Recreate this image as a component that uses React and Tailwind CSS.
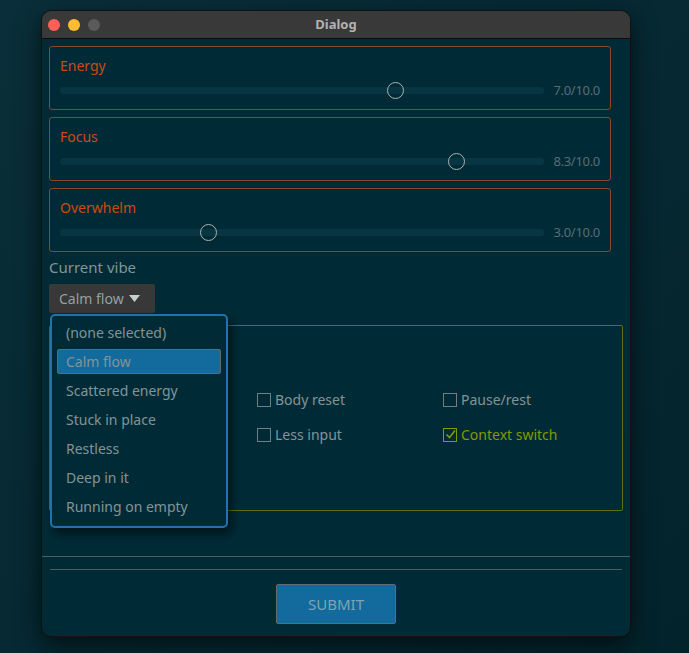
import React from "react";

const font = { fontFamily: '"Noto Sans", "Open Sans", sans-serif' };

function Slider({ label, value }) {
  const p = value / 10;
  return (
    <div className="h-[64px] border border-[#8a4726] rounded-[3px] pl-[10px] pr-[10px] pt-[9px]">
      <div className="text-[14px] leading-[20px] text-[#cb4b16]">{label}</div>
      <div className="flex items-center h-[18px] mt-[5px]">
        <div className="relative flex-1 h-[7px] rounded-[3px] bg-[#073642]">
          <div
            className="absolute top-[-5px] w-[17px] h-[17px] rounded-full border-[1.5px] border-[#a9b3b3]"
            style={{ left: `calc(${p} * (100% - 17px))` }}
          />
        </div>
        <div className="ml-[9px] text-[13px] text-[#586e75] leading-none tracking-[-0.3px]">
          {value.toFixed(1)}/10.0
        </div>
      </div>
    </div>
  );
}

function Check({ label, checked }) {
  return (
    <div className={`flex items-center gap-[4px] text-[14px] ${checked ? "text-[#859900]" : "text-[#839496]"}`}>
      <div
        className={`w-[14px] h-[14px] border flex items-center justify-center ${checked ? "border-[#859900] border-[1.5px]" : "border-[#6c7f84]"}`}
      >
        {checked && (
          <svg width="11" height="11" viewBox="0 0 11 11">
            <path d="M1.5 5.5 L4.5 8.5 L10 1.5" fill="none" stroke="#859900" strokeWidth="1.6" />
          </svg>
        )}
      </div>
      <span>{label}</span>
    </div>
  );
}

const options = [
  "(none selected)",
  "Calm flow",
  "Scattered energy",
  "Stuck in place",
  "Restless",
  "Deep in it",
  "Running on empty",
];

export default function App() {
  return (
    <div className="w-[689px] h-[653px] bg-gradient-to-br from-[#0a2f3a] to-[#03232b] pt-[10px] pl-[41px]" style={font}>
      <div className="w-[590px] h-[627px] rounded-[10px] overflow-hidden flex flex-col border border-[#111] shadow-[0_8px_24px_rgba(0,0,0,0.6)] bg-[#002b36]">
        <div className="h-[28px] bg-[#393939] grid grid-cols-[1fr_auto_1fr] items-center border-b border-[#0d0d0d]">
          <div className="flex items-center gap-[8px] pl-[6px]">
            <div className="w-[12px] h-[12px] rounded-full bg-[#fe5f57]" />
            <div className="w-[12px] h-[12px] rounded-full bg-[#febc2e]" />
            <div className="w-[12px] h-[12px] rounded-full bg-[#5a5a5a]" />
          </div>
          <div className="text-[13px] font-bold text-[#b2b2b2]">Dialog</div>
          <div />
        </div>

        <div className="h-[517px] pl-[7px] pt-[7px]">
          <div className="w-[562px] flex flex-col gap-[7px]">
            <Slider label="Energy" value={7.0} />
            <Slider label="Focus" value={8.3} />
            <Slider label="Overwhelm" value={3.0} />
          </div>
          <div className="mt-[4px] text-[15px] leading-[22px] text-[#839496]">Current vibe</div>
          <div className="relative mt-[6px] w-[106px]">
            <div className="h-[29px] w-[106px] bg-[#383838] rounded-[2px] flex items-center pl-[10px] gap-[5px] text-[14px] text-[#93a1a1]">
              <span>Calm flow</span>
              <svg width="11" height="8" viewBox="0 0 11 8">
                <path d="M0 0 H11 L5.5 7 Z" fill="#c8cfcf" />
              </svg>
            </div>
            <div className="absolute z-10 left-[1px] top-[30px] w-[178px] h-[214px] border-2 border-[#1f73aa] rounded-[5px] bg-[#002b36] shadow-[4px_6px_10px_rgba(0,0,0,0.5)] px-[5px] pt-[2px]">
              {options.map((o, i) => (
                <div key={o} className="h-[29px] flex items-center">
                  <div
                    className={`w-full h-[25px] flex items-center pl-[8px] text-[14px] text-[#839496] border ${
                      i === 1 ? "bg-[#136a9c] border-[#5c6c70] rounded-[2px] text-[#93a1a1]" : "border-transparent"
                    }`}
                  >
                    {o}
                  </div>
                </div>
              ))}
            </div>
          </div>
          <div className="mt-[12px] w-[574px] h-[186px] border border-[#5f7010] rounded-[2px] pl-[207px] pt-[63px]">
            <div className="grid grid-cols-[186px_186px] gap-y-[14px]">
              <Check label="Body reset" />
              <Check label="Pause/rest" />
              <Check label="Less input" />
              <Check label="Context switch" checked />
            </div>
          </div>
        </div>

        <div className="h-px bg-[#4f5f60]" />
        <div className="px-[8px] pt-[12px]">
          <div className="h-px bg-[#4f5f60]" />
          <div className="flex justify-center mt-[14px]">
            <div className="w-[120px] h-[40px] bg-[#136a9c] border border-[#5c6c70] rounded-[2px] flex items-center justify-center text-[15px] text-[#7fa3b3]">
              SUBMIT
            </div>
          </div>
        </div>
      </div>
    </div>
  );
}
